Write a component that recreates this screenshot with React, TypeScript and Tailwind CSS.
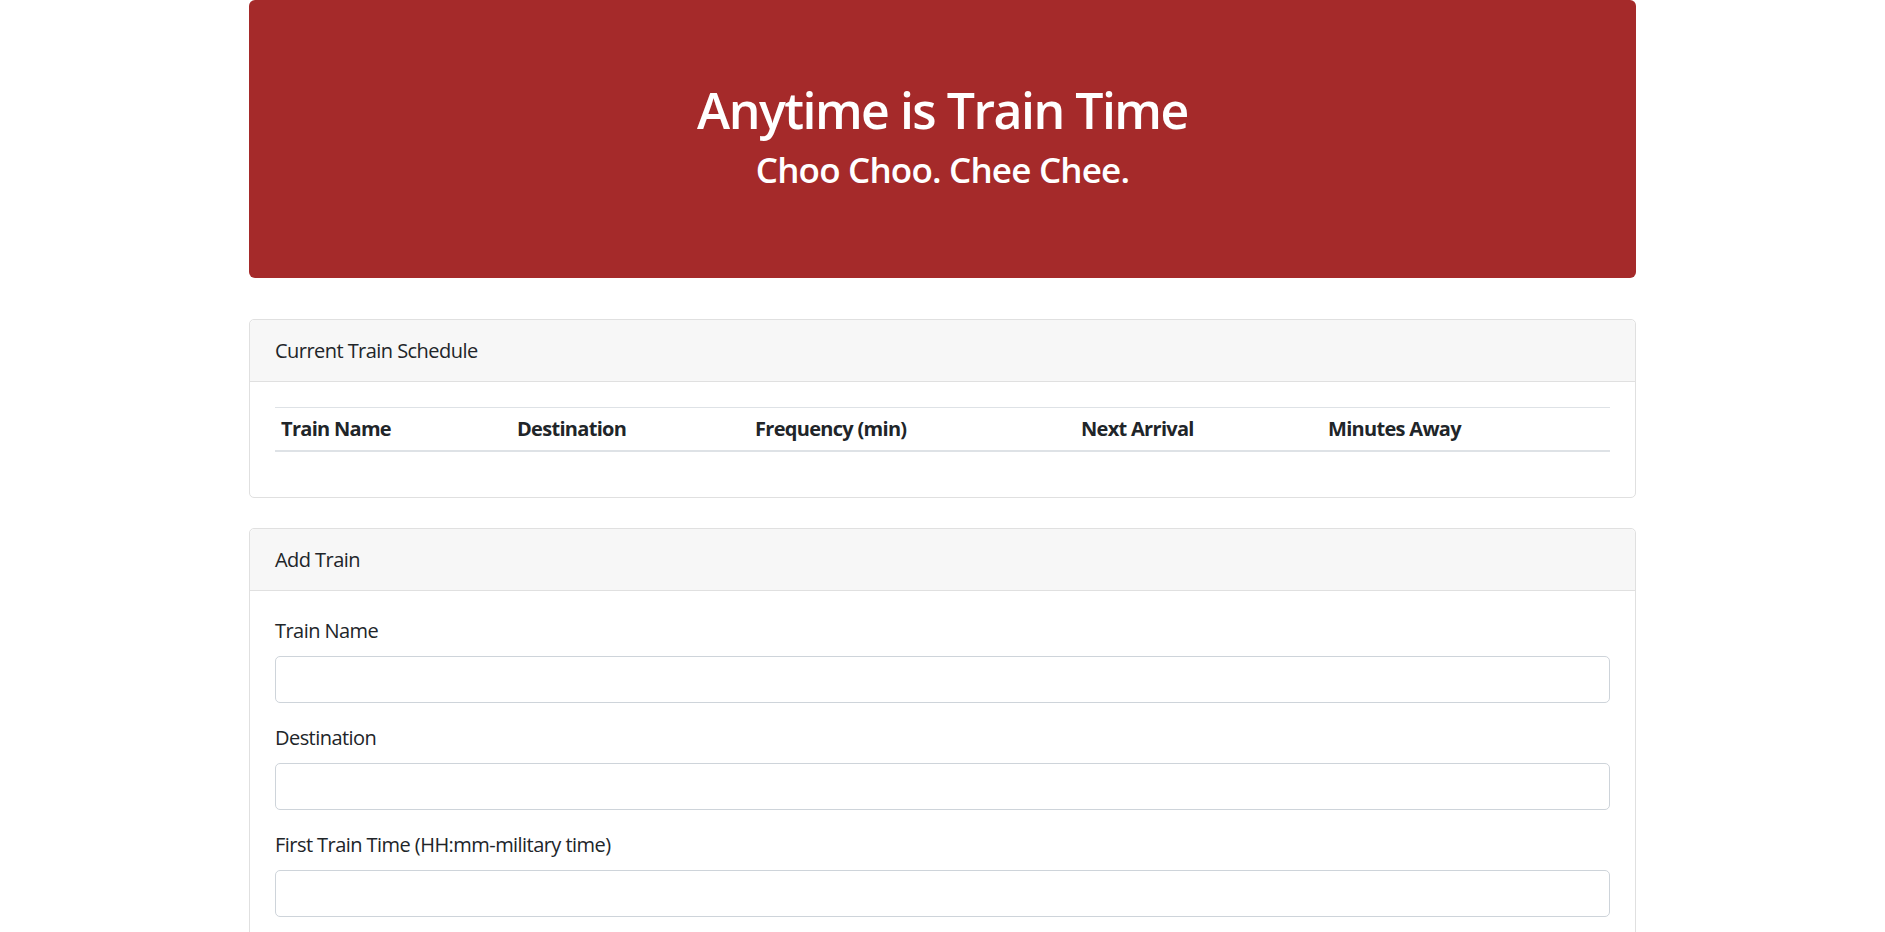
import React from 'react';

const columns = [
    { label: 'Train Name', width: 'w-[236px]' },
    { label: 'Destination', width: 'w-[238px]' },
    { label: 'Frequency (min)', width: 'w-[326px]' },
    { label: 'Next Arrival', width: 'w-[247px]' },
    { label: 'Minutes Away', width: '' },
];

const fields = ['Train Name', 'Destination', 'First Train Time (HH:mm-military time)'];

const Card: React.FC<{ title: string; className?: string; children: React.ReactNode }> = ({ title, className = '', children }) => (
    <div className={`rounded-[5px] border border-[#e0e0e0] bg-white ${className}`}>
        <div className="h-[62px] pt-[1px] px-[25px] flex items-center bg-[#f7f7f7] border-b border-[#e0e0e0] rounded-t-[5px]">
            {title}
        </div>
        <div className="p-[25px]">{children}</div>
    </div>
);

export default function App() {
    return (
        <div className="min-h-screen bg-white text-[#212529] text-[20px] leading-[30px] tracking-[-0.55px] font-['Open_Sans',sans-serif]">
            <div className="w-[1387px] mx-auto">
                <div className="bg-[#a52a2a] rounded-[6px] pt-[80px] pb-[80px] text-center text-white">
                    <h1 className="text-[50px] leading-[60px] font-semibold tracking-[-1.5px] mb-[9px]">Anytime is Train Time</h1>
                    <h3 className="text-[35px] leading-[42px] font-semibold tracking-[-0.8px] mb-[7px]">Choo Choo. Chee Chee.</h3>
                </div>

                <Card title="Current Train Schedule" className="mt-[41px]">
                    <table className="w-full border-collapse table-fixed mb-[20px]">
                        <thead>
                            <tr className="border-t border-[#dee2e6] border-b-2">
                                {columns.map(col => (
                                    <th key={col.label} className={`text-left font-bold tracking-[-0.7px] px-[6px] py-[6px] ${col.width}`}>
                                        {col.label}
                                    </th>
                                ))}
                            </tr>
                        </thead>
                        <tbody></tbody>
                    </table>
                </Card>

                <Card title="Add Train" className="mt-[30px]">
                    <form>
                        {fields.map(field => (
                            <div key={field} className="mb-[20px]">
                                <label className="block mb-[10px]">{field}</label>
                                <input
                                    type="text"
                                    className="block w-full h-[47px] rounded-[5px] border border-[#ced4da] px-[15px] outline-none"
                                />
                            </div>
                        ))}
                    </form>
                </Card>
            </div>
        </div>
    );
}
